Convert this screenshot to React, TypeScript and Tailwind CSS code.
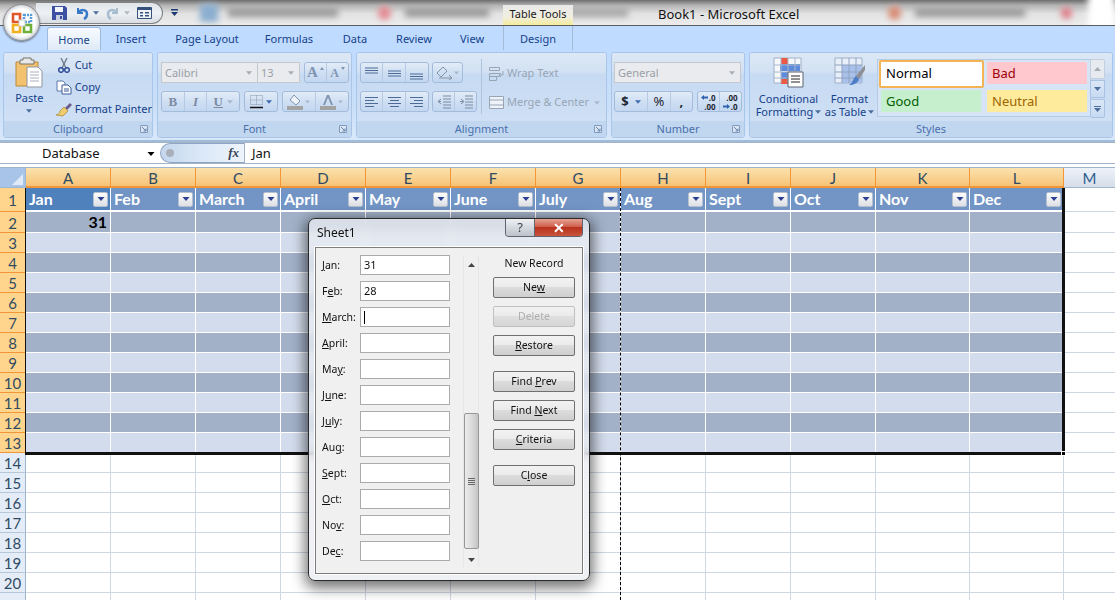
import type { ReactNode } from 'react';

const columns = ['A', 'B', 'C', 'D', 'E', 'F', 'G', 'H', 'I', 'J', 'K', 'L'];
const months = ['Jan', 'Feb', 'March', 'April', 'May', 'June', 'July', 'Aug', 'Sept', 'Oct', 'Nov', 'Dec'];
const rows = Array.from({ length: 21 }, (_, i) => i + 1);

// mnemonic underline: [before, underlined, after]
const fields: [string, string, string, string][] = [
  ['', 'J', 'an:', '31'],
  ['F', 'e', 'b:', '28'],
  ['', 'M', 'arch:', ''],
  ['', 'A', 'pril:', ''],
  ['Ma', 'y', ':', ''],
  ['J', 'u', 'ne:', ''],
  ['J', 'u', 'ly:', ''],
  ['Au', 'g', ':', ''],
  ['', 'S', 'ept:', ''],
  ['', 'O', 'ct:', ''],
  ['No', 'v', ':', ''],
  ['De', 'c', ':', ''],
];

function Caret({ className = 'fill-[#15428b]', w = 7 }: { className?: string; w?: number }) {
  return (
    <svg width={w} height={4} viewBox="0 0 7 4" className={className}>
      <path d="M0 0h7L3.5 4z" />
    </svg>
  );
}

function Launcher() {
  return (
    <svg width="9" height="9" viewBox="0 0 9 9" className="absolute right-[3px] top-[4px]">
      <path d="M.5.5h7v7h-7z" fill="#dbe6f4" stroke="#7f9cc0" />
      <path d="M2 2l4 4M6 3.5V6H3.5" fill="none" stroke="#6583a8" />
    </svg>
  );
}

function Group({ label, width, children }: { label: string; width: string; children: ReactNode }) {
  return (
    <div className={`${width} flex h-[86px] flex-col overflow-hidden rounded-[3px] border border-[#a9c6e8]`}>
      <div className="flex-1 bg-[linear-gradient(#dde8f5,#d2e1f3_28%,#c6daf2_32%,#cfe0f5)]">{children}</div>
      <div className="relative h-[16px] bg-[#c1d7f0] text-center text-[11px] leading-[15px] text-[#4a71ad]">
        {label}
        {label !== 'Styles' && <Launcher />}
      </div>
    </div>
  );
}

function BtnGroup({ children, className = '' }: { children: ReactNode; className?: string }) {
  return (
    <div className={`flex h-[21px] items-center divide-x divide-[#b5c9e2] rounded-[3px] border border-[#a3bcdc] bg-[linear-gradient(#e3ecf7,#cfdff3_50%,#c3d7f0)] ${className}`}>
      {children}
    </div>
  );
}

function Cell({ w, children }: { w: string; children: ReactNode }) {
  return <div className={`${w} flex h-full items-center justify-center gap-[2px]`}>{children}</div>;
}

function Lines({ kind }: { kind: 'top' | 'mid' | 'bot' | 'left' | 'center' | 'right' }) {
  const color = '#4d6b96';
  if (kind === 'top' || kind === 'mid' || kind === 'bot') {
    const y = kind === 'top' ? 3 : kind === 'mid' ? 6 : 9;
    return (
      <svg width="15" height="16" viewBox="0 0 15 16" stroke={color}>
        {[0, 2.5, 5].map((d) => (
          <path key={d} d={`M1 ${y + d}h13`} />
        ))}
      </svg>
    );
  }
  const d =
    kind === 'left'
      ? ['M1 3.5h13', 'M1 6.5h9', 'M1 9.5h13', 'M1 12.5h9']
      : kind === 'center'
        ? ['M1 3.5h13', 'M3 6.5h9', 'M1 9.5h13', 'M3 12.5h9']
        : ['M1 3.5h13', 'M5 6.5h9', 'M1 9.5h13', 'M5 12.5h9'];
  return (
    <svg width="15" height="16" viewBox="0 0 15 16" stroke={color}>
      {d.map((p) => (
        <path key={p} d={p} />
      ))}
    </svg>
  );
}

function Arrow({ flip = false }: { flip?: boolean }) {
  return (
    <svg width="7" height="5" viewBox="0 0 7 5" fill="#2e62b0" className={flip ? 'rotate-180' : ''}>
      <path d="M0 2.500L3 0v1.500h4v2H3V5z" />
    </svg>
  );
}

function TitleBar() {
  return (
    <div className="relative h-[26px] overflow-hidden border-b border-[#5c5c5c] bg-[linear-gradient(#6e6e6e,#b5b5b5_22%,#e2e2e2_55%,#ececec)]">
      {/* blurred aero glass showing the windows behind */}
      <div className="absolute inset-0 flex items-center pl-[200px] blur-[3px]">
        <div className="h-[18px] w-[20px] bg-[#8aaed0]" />
        <div className="ml-[10px] h-[9px] w-[120px] bg-[#9a9a9a]" />
        <div className="ml-[40px] h-[14px] w-[14px] rounded-full bg-[#e58a92]" />
        <div className="ml-[14px] h-[9px] w-[92px] bg-[#989898]" />
        <div className="ml-[76px] h-[9px] w-[70px] bg-[#a8a8a8]" />
        <div className="ml-[260px] h-[14px] w-[14px] rounded-full bg-[#d98a72]" />
        <div className="ml-[14px] h-[9px] w-[120px] bg-[#9a9a9a]" />
        <div className="ml-[36px] h-[12px] w-[12px] rounded-full bg-[#df7d88]" />
        <div className="ml-[16px] h-[80px] w-[30px] bg-white" />
      </div>
      <div className="relative flex h-full items-start">
        <div className="ml-[36px] mt-[2px] flex h-[22px] w-[127px] items-center rounded-r-[11px] border border-l-0 border-[#7f8285] bg-[linear-gradient(#dfe3e8,#eef1f4_50%,#dadde2)] pl-[16px]">
          <svg width="15" height="14" viewBox="0 0 15 14">
            <path d="M0 0h13l2 2v12H0z" fill="#3b4fa3" />
            <path d="M3 1h8v5H3z" fill="#f2f5fb" />
            <path d="M4 9h7v5H4z" fill="#c8d0e0" />
            <path d="M8 10h2v3H8z" fill="#3b4fa3" />
          </svg>
          <svg width="14" height="13" viewBox="0 0 14 13" fill="none" className="ml-[8px]">
            <path d="M3 1v5h5" stroke="#3a79c8" strokeWidth="2" />
            <path d="M3 6c3-4 9-4 9 1 0 2-1 4-3 5" stroke="#3a79c8" strokeWidth="2.5" />
          </svg>
          <Caret className="ml-[4px] fill-[#4c6f9e]" w={6} />
          <svg width="14" height="13" viewBox="0 0 14 13" fill="none" className="ml-[7px]">
            <path d="M11 1v5H6" stroke="#a9bdd0" strokeWidth="2" />
            <path d="M11 6C8 2 2 2 2 7c0 2 1 4 3 5" stroke="#a9bdd0" strokeWidth="2.5" />
          </svg>
          <Caret className="ml-[4px] fill-[#b3b9c1]" w={6} />
          <svg width="15" height="12" viewBox="0 0 15 12" className="ml-[7px]">
            <path d="M.5.5h14v11H.5z" fill="#eef2f6" stroke="#33517c" />
            <path d="M1 1h13v2H1z" fill="#33517c" />
            <path d="M3 5h3v1.5H3zM8 5h4v1.5H8zM3 8h3v1.5H3zM8 8h4v1.5H8z" fill="#33517c" />
          </svg>
        </div>
        <svg width="7" height="8" viewBox="0 0 7 8" className="ml-[8px] mt-[9px] fill-[#1d3b72]">
          <path d="M0 0h7v1.500H0zM0 3h7L3.500 7z" />
        </svg>
        <div className="ml-[325px] mt-[5px] flex h-[20px] w-[70px] items-center justify-center bg-[linear-gradient(#e9e9e9,#f1efe0_60%,#f4eb9a)] pb-[2px] text-[11px] text-[#1a1a1a]">
          Table Tools
        </div>
        <div className="ml-[85px] mt-[4px] text-[13px] leading-[20px] text-[#111]">Book1 - Microsoft Excel</div>
      </div>
    </div>
  );
}

function Tabs() {
  const tabs: [string, string][] = [
    ['Insert', 'w-[60px]'],
    ['Page Layout', 'w-[92px]'],
    ['Formulas', 'w-[72px]'],
    ['Data', 'w-[60px]'],
    ['Review', 'w-[58px]'],
    ['View', 'w-[58px]'],
  ];
  return (
    <div className="flex h-[24px] items-end bg-[#bfdbff] pl-[47px] text-[11px] text-[#15428b]">
      <div className="flex h-[23px] w-[54px] items-center justify-center rounded-t-[3px] border border-b-0 border-[#9dbbe0] bg-[linear-gradient(#f7fbff,#dfeaf8)] pt-[2px]">
        Home
      </div>
      {tabs.map(([t, w]) => (
        <div key={t} className={`${w} flex h-[24px] items-center justify-center pt-[2px]`}>
          {t}
        </div>
      ))}
      <div className="ml-[2px] flex h-[24px] w-[70px] items-center justify-center border-x border-[#a3bbd6] pt-[2px]">Design</div>
    </div>
  );
}

function ClipboardGroup() {
  return (
    <Group label="Clipboard" width="w-[150px]">
      <div className="flex h-full pl-[6px] pt-[4px] text-[11px] text-[#15428b]">
        <div className="flex w-[40px] flex-col items-center">
          <svg width="28" height="31" viewBox="0 0 28 31">
            <path d="M1 5h22v24H1z" fill="#f3c26f" stroke="#b98a3e" />
            <path d="M8 1h8v2h3v4H5V3h3z" fill="#e8e8e8" stroke="#77726a" />
            <path d="M12 10h11l4 4v16H12z" fill="#fff" stroke="#8f97a3" />
            <path d="M15 15h9M15 18h9M15 21h9M15 24h9" stroke="#a9b1bd" />
          </svg>
          <div className="mt-[3px] leading-[14px]">Paste</div>
          <Caret className="mt-[4px] fill-[#4c6f9e]" w={6} />
        </div>
        <div className="ml-[7px] flex flex-col gap-[8px] pt-[1px]">
          {[
            ['Cut', 'cut'],
            ['Copy', 'copy'],
            ['Format Painter', 'paint'],
          ].map(([t, k]) => (
            <div key={t} className="flex h-[14px] items-center gap-[3px] whitespace-nowrap leading-[14px]">
              <svg width="16" height="15" viewBox="0 0 16 15" fill="none">
                {k === 'cut' && (
                  <>
                    <path d="M5 0l5 10M11 0L6 10" stroke="#6a7686" strokeWidth="1.300" />
                    <circle cx="5" cy="12" r="2.300" stroke="#2d4f9a" strokeWidth="1.500" />
                    <circle cx="11" cy="12" r="2.300" stroke="#2d4f9a" strokeWidth="1.500" />
                  </>
                )}
                {k === 'copy' && (
                  <>
                    <path d="M1 1h6l2 2v8H1z" fill="#fff" stroke="#5a78a8" />
                    <path d="M6 5h6l3 3v6H6z" fill="#fff" stroke="#3a5d9a" />
                    <path d="M8 9h5M8 11h5" stroke="#3a5d9a" />
                  </>
                )}
                {k === 'paint' && (
                  <>
                    <path d="M9 6l5-5 2 2-5 5z" fill="#6a5a8c" />
                    <path d="M8 5l4 4-5 5-7-1c3-1 4-2 4-4z" fill="#f0cd6c" stroke="#a88534" strokeWidth=".7" />
                  </>
                )}
              </svg>
              <span>{t}</span>
            </div>
          ))}
        </div>
      </div>
    </Group>
  );
}

function FontGroup() {
  return (
    <Group label="Font" width="w-[195px]">
      <div className="flex h-full flex-col gap-[8px] pl-[3px] pt-[9px] text-[11px]">
        <div className="flex">
          <div className="flex h-[21px] w-[97px] items-center justify-between border border-[#c5c9ce] bg-[#e9ebee] px-[3px] pr-[5px] pt-px text-[#9a9fa6]">
            Calibri
            <Caret className="fill-[#a6acb4]" w={6} />
          </div>
          <div className="flex h-[21px] w-[42px] items-center justify-between border border-l-0 border-[#c5c9ce] bg-[#e9ebee] pl-[3px] pr-[5px] pt-px text-[#9a9fa6]">
            13
            <Caret className="fill-[#a6acb4]" w={6} />
          </div>
          <BtnGroup className="ml-[4px] w-[45px]">
            <Cell w="w-[23px]">
              <span className="font-['Liberation_Serif',serif] text-[15px] font-bold text-[#7f95b2]">A</span>
              <span className="mb-[9px] border-x-[2px] border-b-[3px] border-x-transparent border-b-[#7f95b2]" />
            </Cell>
            <Cell w="w-[22px]">
              <span className="font-['Liberation_Serif',serif] text-[12px] font-bold text-[#7f95b2]">A</span>
              <span className="mb-[9px] border-x-[2px] border-t-[3px] border-x-transparent border-t-[#7f95b2]" />
            </Cell>
          </BtnGroup>
        </div>
        <div className="flex gap-[4px]">
          <BtnGroup className="w-[79px] font-['Liberation_Serif',serif] text-[13px] text-[#7c8ca3]">
            <Cell w="w-[23px]"><b>B</b></Cell>
            <Cell w="w-[23px]"><i><b>I</b></i></Cell>
            <Cell w="w-[32px]">
              <u><b>U</b></u>
              <Caret className="ml-[2px] fill-[#a9b8cc]" w={6} />
            </Cell>
          </BtnGroup>
          <BtnGroup className="w-[34px]">
            <div className="flex h-full w-full items-center justify-center gap-[3px]">
              <svg width="13" height="14" viewBox="0 0 13 14" fill="none">
                <path d="M.5.5h12v9H.5zM6.500.5v9M.5 5h12" stroke="#8a96a6" strokeDasharray="1 1" />
                <path d="M0 12.500h13" stroke="#111" strokeWidth="1.500" />
              </svg>
              <Caret className="fill-[#3f6bb0]" w={6} />
            </div>
          </BtnGroup>
          <BtnGroup className="w-[67px]">
            <Cell w="w-[33px]">
              <svg width="16" height="16" viewBox="0 0 16 16">
                <path d="M7 1l6 6-4 4-6-5z" fill="#eef3fa" stroke="#8294ad" />
                <path d="M0 12h16v4H0z" fill="#a3a3a3" />
              </svg>
              <Caret className="fill-[#a9b8cc]" w={5} />
            </Cell>
            <Cell w="w-[33px]">
              <svg width="16" height="16" viewBox="0 0 16 16">
                <path d="M3 11L7 1h2l4 10h-2L8 3.500 5 11z" fill="#7f95b2" />
                <path d="M0 12h16v4H0z" fill="#a3a3a3" />
              </svg>
              <Caret className="fill-[#a9b8cc]" w={5} />
            </Cell>
          </BtnGroup>
        </div>
      </div>
    </Group>
  );
}

function AlignmentGroup() {
  return (
    <Group label="Alignment" width="w-[251px]">
      <div className="flex h-full pl-[3px] pt-[9px] text-[11px] text-[#98a5b5]">
        <div className="flex flex-col gap-[8px]">
          <div className="flex gap-[3px]">
            <BtnGroup className="w-[69px]">
              <Cell w="w-[23px]"><Lines kind="top" /></Cell>
              <Cell w="w-[23px]"><Lines kind="mid" /></Cell>
              <Cell w="w-[23px]"><Lines kind="bot" /></Cell>
            </BtnGroup>
            <BtnGroup className="w-[31px]">
              <div className="flex h-full w-full items-center justify-center gap-[1px]">
                <svg width="17" height="15" viewBox="0 0 17 15" fill="none" stroke="#8593a6">
                  <path d="M1 8l6-6 4 4-6 6zM3 13h13M13 10l3 3-3 2" />
                </svg>
                <Caret className="fill-[#a9b8cc]" w={5} />
              </div>
            </BtnGroup>
          </div>
          <div className="flex gap-[3px]">
            <BtnGroup className="w-[69px]">
              <Cell w="w-[23px]"><Lines kind="left" /></Cell>
              <Cell w="w-[23px]"><Lines kind="center" /></Cell>
              <Cell w="w-[23px]"><Lines kind="right" /></Cell>
            </BtnGroup>
            <BtnGroup className="w-[45px]">
              {['M5 7.500l-3 0M5 5L2 7.500 5 10', 'M2 7.500h3M3 5l3 2.500L3 10'].map((d) => (
                <Cell key={d} w="w-[22px]">
                  <svg width="15" height="15" viewBox="0 0 15 15" fill="none" stroke="#7b8ca4">
                    <path d={d} />
                    <path d="M7 2h8M7 5h8M7 8h8M7 11h8M7 14h8" />
                  </svg>
                </Cell>
              ))}
            </BtnGroup>
          </div>
        </div>
        <div className="ml-[4px] mt-[-3px] h-[55px] w-px bg-[#aec4de]" />
        <div className="ml-[7px] flex flex-col gap-[12px] pt-[3px]">
          <div className="flex h-[17px] items-center gap-[3px]">
            <svg width="15" height="15" viewBox="0 0 15 15" fill="none" stroke="#98a5b5">
              <path d="M.5 1.500h10v3H.5zM.5 7.500h10v3H.5zM.5 10.500h7v4H.5zM14 5v4h-4M12 7l-2 2 2 2" />
            </svg>
            Wrap Text
          </div>
          <div className="flex h-[17px] items-center gap-[3px]">
            <svg width="15" height="13" viewBox="0 0 15 13" fill="#eef3fa" stroke="#98a5b5">
              <path d="M.5.500h14v12H.5zM.5 4h14M.5 9h14" />
            </svg>
            Merge &amp; Center
            <Caret className="ml-[2px] fill-[#a9b8cc]" w={6} />
          </div>
        </div>
      </div>
    </Group>
  );
}

function NumberGroup() {
  return (
    <Group label="Number" width="w-[134px]">
      <div className="flex h-full flex-col gap-[8px] pl-[2px] pt-[9px] text-[11px]">
        <div className="flex h-[21px] w-[127px] items-center justify-between border border-[#c5c9ce] bg-[#e9ebee] pl-[3px] pr-[5px] pt-px text-[#9a9fa6]">
          General
          <Caret className="fill-[#a6acb4]" w={6} />
        </div>
        <div className="flex gap-[4px]">
          <BtnGroup className="w-[79px] text-[13px] font-bold text-[#1f2733]">
            <Cell w="w-[34px]">
              $ <Caret className="ml-[4px] fill-[#3f6bb0]" w={6} />
            </Cell>
            <Cell w="w-[23px]"><span className="font-normal">%</span></Cell>
            <Cell w="w-[22px]">,</Cell>
          </BtnGroup>
          <BtnGroup className="w-[45px] text-[8px] font-bold leading-[9px] text-[#1f2733]">
            <Cell w="w-[22px]">
              <div className="flex flex-col items-end">
                <span className="flex items-center gap-px"><Arrow />.0</span>
                <span>.00</span>
              </div>
            </Cell>
            <Cell w="w-[22px]">
              <div className="flex flex-col items-end">
                <span>.00</span>
                <span className="flex items-center gap-px"><Arrow flip />.0</span>
              </div>
            </Cell>
          </BtnGroup>
        </div>
      </div>
    </Group>
  );
}

function StyleTile({ className, children }: { className: string; children: ReactNode }) {
  return <div className={`flex items-center pl-[5px] text-[13px] ${className}`}>{children}</div>;
}

function StylesGroup() {
  return (
    <Group label="Styles" width="w-[364px]">
      <div className="flex h-full text-[11px] leading-[13px] text-[#15428b]">
        <div className="flex w-[67px] flex-col items-center pl-[10px] pt-[4px]">
          <svg width="31" height="31" viewBox="0 0 31 31">
            <path d="M1 1h27v25H1z" fill="#f6f8fb" stroke="#9fb0c8" />
            <path d="M8 1h7v8H8zM8 15h7v12H8z" fill="#ea5a44" />
            <path d="M7 7h20v7H7z M8 15h7v7H8z" fill="#5f8bdc" />
            <path d="M1 8h27M1 15h27M1 21h27M8 1v25M15 1v25M22 1v25" stroke="#a9b8cc" fill="none" />
            <path d="M15 15h15v15H15z" fill="#fff" stroke="#5c6470" />
            <path d="M18 19h9M18 22h9M18 25h9" stroke="#222" />
          </svg>
          <div className="mt-[4px] whitespace-nowrap text-center">
            Conditional
            <br />
            <span className="inline-flex items-center gap-[2px]">
              Formatting <Caret className="fill-[#4c6f9e]" w={6} />
            </span>
          </div>
        </div>
        <div className="flex w-[59px] flex-col items-center pl-[6px] pt-[4px]">
          <svg width="31" height="31" viewBox="0 0 31 31">
            <path d="M1 1h27v25H1z" fill="#e9eff8" stroke="#9fb0c8" />
            <path d="M8 8h20v18H8z" fill="#a9c1ea" />
            <path d="M1 8h27M1 15h27M1 21h27M8 1v25M15 1v25M22 1v25" stroke="#8fa3c0" fill="none" />
            <path d="M31 8l-9 11 3 3 6-9z" fill="#8d8f92" />
            <path d="M22 19l3 3c-1 4-5 6-10 6 4-2 4-7 7-9z" fill="#4f7ec9" />
          </svg>
          <div className="mt-[4px] whitespace-nowrap text-center">
            Format
            <br />
            <span className="inline-flex items-center gap-[2px]">
              as Table <Caret className="fill-[#4c6f9e]" w={6} />
            </span>
          </div>
        </div>
        <div className="ml-[1px] mt-[6px] grid h-[58px] w-[214px] grid-cols-[105px_100px] content-start gap-x-[3px] border border-[#b4cbe6] bg-[#d6e4f6] pl-px">
          <StyleTile className="h-[28px] rounded-[2px] border-2 border-[#f2b455] bg-white pb-[2px] text-black">Normal</StyleTile>
          <StyleTile className="mt-[2px] h-[22px] bg-[#ffc7ce] text-[#9c0006]">Bad</StyleTile>
          <StyleTile className="ml-[2px] mt-[2px] h-[22px] w-[100px] bg-[#c6efce] text-[#006100]">Good</StyleTile>
          <StyleTile className="mt-[2px] h-[22px] bg-[#ffeb9c] text-[#9c6500]">Neutral</StyleTile>
        </div>
        <div className="ml-[-1px] mt-[6px] flex w-[15px] flex-col gap-[1px]">
          <div className="flex h-[20px] items-center justify-center rounded-t-[2px] border border-[#c3cfde] bg-[#e7ebf0]">
            <Caret className="rotate-180 fill-[#a7adb5]" w={7} />
          </div>
          <div className="flex h-[18px] items-center justify-center border border-[#a9c2e2] bg-[linear-gradient(#dbe7f6,#c7daf2)]">
            <Caret className="fill-[#4f6f9e]" w={7} />
          </div>
          <div className="flex h-[19px] flex-col items-center justify-center gap-[1px] rounded-b-[2px] border border-[#a9c2e2] bg-[linear-gradient(#dbe7f6,#c7daf2)]">
            <div className="h-px w-[7px] bg-[#4f6f9e]" />
            <Caret className="fill-[#4f6f9e]" w={7} />
          </div>
        </div>
      </div>
    </Group>
  );
}

function FormulaBar() {
  return (
    <div className="flex h-[22px] items-center border-y border-[#a3b4c8] bg-white text-[13px] text-[#111]">
      <div className="flex w-[160px] items-center justify-between pl-[42px] pr-[5px] pt-[2px]">
        Database
        <Caret className="fill-black" w={8} />
      </div>
      <div className="flex h-[20px] w-[84px] items-center justify-between rounded-l-[10px] border-y border-l border-[#8ea6c2] bg-[linear-gradient(90deg,#c5d7ee,#dbe8f8_50%,#eef4fb)] pl-[5px] pr-[5px]">
        <span className="h-[8px] w-[8px] rounded-full bg-[#a9b0ba]" />
        <span className="font-['Liberation_Serif',serif] text-[13px] font-bold italic text-[#3a4352]">fx</span>
      </div>
      <div className="flex h-full flex-1 items-center border-l border-[#a3b4c8] pl-[7px] pt-[2px]">Jan</div>
    </div>
  );
}

function FilterButton() {
  return (
    <span className="flex h-[15px] w-[15px] items-center justify-center rounded-[2px] border border-[#b5bfcd] bg-[linear-gradient(#fdfdfd,#dcdfe4)]">
      <Caret className="fill-[#2a3f8f]" w={8} />
    </span>
  );
}

function Sheet() {
  const labelFont = "pt-[2px] font-['Lato',sans-serif] text-[15px] text-[#2f4a63]";
  return (
    <div className="grid grid-cols-[26px_85px_85px_85px_85px_85px_85px_85px_85px_85px_85px_94px_94px_51px] grid-rows-[20px_24px_21px_repeat(19,20px)] font-['Lato',sans-serif]">
      <div className="flex items-end justify-end border-r border-b border-[#9eb6ce] bg-[#a9c4e9] p-[2px]">
        <div className="border-b-[11px] border-l-[11px] border-b-[#dfe9f7] border-l-transparent" />
      </div>
      {columns.map((c) => (
        <div key={c} className={`flex items-center justify-center border-r border-b-2 border-r-[#f29536] border-b-[#f29536] bg-[linear-gradient(#fbe2ae,#f6c377)] ${labelFont}`}>
          {c}
        </div>
      ))}
      <div className="flex items-center justify-center border-b border-[#9eb6ce] bg-[linear-gradient(#eef3fa,#d5dde8)] pt-[2px] text-[15px] text-[#2f5c8f]">M</div>
      {rows.map((r) => (
        <div key={r} className="contents">
          <div className={`flex items-center justify-center border-r border-b ${r <= 13 ? 'border-r-[#f29536] border-b-[#f29536] bg-[#ffd58d]' : 'border-r-[#9eb6ce] border-b-[#b7c7da] bg-[#e4ecf7]'} ${labelFont}`}>
            {r <= 20 ? r : ''}
          </div>
          {columns.map((c, i) => {
            if (r === 1) {
              return (
                <div key={c} className={`flex items-center justify-between border-r border-b-2 border-r-white border-b-white pl-[3px] pr-[2px] text-[16px] font-bold text-white ${i === 0 ? 'bg-[#4f81bd]' : 'bg-[#7295c6]'}`}>
                  {months[i]}
                  <FilterButton />
                </div>
              );
            }
            if (r <= 13) {
              return (
                <div key={c} className={`flex items-center justify-end border-r border-b border-white pr-[3px] text-[16px] font-bold text-black ${r % 2 === 0 ? 'bg-[#a2b1c8]' : 'bg-[#d3dcec]'}`}>
                  {r === 2 && i === 0 ? '31' : ''}
                </div>
              );
            }
            return <div key={c} className="border-r border-b border-[#d0d7e5] bg-white" />;
          })}
          <div className="border-b border-[#d0d7e5] bg-white" />
        </div>
      ))}
    </div>
  );
}

function DialogButton({ before = '', mark, after = '', disabled = false, className = '' }: { before?: string; mark?: string; after?: string; disabled?: boolean; className?: string }) {
  return (
    <div className={`flex h-[21px] w-[82px] items-center justify-center rounded-[2px] border bg-[linear-gradient(#f2f2f2,#ebebeb_45%,#dcdcdc_50%,#cfcfcf)] pt-px ${disabled ? 'border-[#b5b5b5] text-[#a0a0a0] opacity-80' : 'border-[#707070] text-[#111]'} ${className}`}>
      <span>
        {before}
        {mark && <u>{mark}</u>}
        {after}
      </span>
    </div>
  );
}

function RecordDialog() {
  return (
    <div className="absolute left-[308px] top-[218px] flex h-[363px] w-[282px] flex-col rounded-[7px] border border-[#2a2a2a] bg-[#e9ecf1]/75 px-[6px] pb-[6px] text-[10.5px] text-[#111] shadow-[0_4px_14px_3px_rgba(0,0,0,0.55)] backdrop-blur-[4px]">
      <div className="flex h-[28px] items-start justify-between">
        <div className="pl-[2px] pt-[5px] text-[12px] leading-[18px]">Sheet1</div>
        <div className="flex h-[18px] overflow-hidden rounded-b-[4px] border border-t-0 border-[#5f6570]">
          <div className="flex w-[29px] items-center justify-center border-r border-[#5f6570] bg-[linear-gradient(#eef0f3,#bcc2cb)] text-[13px] text-[#3c434e]">?</div>
          <div className="flex w-[47px] items-center justify-center bg-[linear-gradient(#e5a193,#d0604c_45%,#b8321e_50%,#c9553c)] text-[14px] font-bold leading-none text-white">✕</div>
        </div>
      </div>
      <div className="flex flex-1 border border-[#7d7d7d] bg-[#f0f0f0] pl-[6px] pr-[7px] pt-[7px] shadow-[0_0_0_1px_#fff]">
        <div className="flex w-[128px] flex-col gap-[6px]">
          {fields.map(([b, m, a, v]) => (
            <div key={m + a} className="flex h-[20px] items-center">
              <div className="w-[38px] whitespace-nowrap pt-[2px]">
                {b}
                <u>{m}</u>
                {a}
              </div>
              <div className="flex h-[20px] w-[90px] items-center border border-[#ababab] bg-white pl-[3px] pt-px text-[11px]">
                {v}
                {m === 'M' && <span className="h-[13px] w-px bg-black" />}
              </div>
            </div>
          ))}
        </div>
        <div className="ml-[13px] mt-px flex h-[311px] w-[16px] flex-col items-center border-x border-[#e6e6e6]">
          <div className="flex h-[18px] items-center">
            <Caret className="rotate-180 fill-[#444]" w={7} />
          </div>
          <div className="flex-1" />
          <div className="flex h-[136px] w-[15px] items-center justify-center rounded-[2px] border border-[#979797] bg-[linear-gradient(90deg,#eaeaea,#dcdcdc_50%,#c4c4c4)]">
            <div className="flex flex-col gap-[1px]">
              <div className="h-px w-[7px] bg-[#666]" />
              <div className="h-px w-[7px] bg-[#666]" />
              <div className="h-px w-[7px] bg-[#666]" />
              <div className="h-px w-[7px] bg-[#666]" />
            </div>
          </div>
          <div className="flex h-[18px] items-center pt-[3px]">
            <Caret className="fill-[#444]" w={7} />
          </div>
        </div>
        <div className="ml-[14px] flex flex-col items-center">
          <div className="h-[22px] leading-[16px]">New Record</div>
          <DialogButton before="Ne" mark="w" />
          <DialogButton before="Delete" disabled className="mt-[8px]" />
          <DialogButton mark="R" after="estore" className="mt-[8px]" />
          <DialogButton before="Find " mark="P" after="rev" className="mt-[15px]" />
          <DialogButton before="Find " mark="N" after="ext" className="mt-[8px]" />
          <DialogButton mark="C" after="riteria" className="mt-[8px]" />
          <DialogButton before="C" mark="l" after="ose" className="mt-[15px]" />
        </div>
      </div>
    </div>
  );
}

export default function App() {
  return (
    <div className="relative h-[600px] w-[1115px] overflow-hidden bg-white font-['Noto_Sans',sans-serif]">
      <TitleBar />
      <Tabs />
      <div className="flex h-[92px] gap-[4px] border-b-[2px] border-[#a0bcd8] bg-[linear-gradient(#bfdbff,#c9dff8_60%,#d8e8fb)] pl-[3px] pt-[2px]">
        <ClipboardGroup />
        <FontGroup />
        <AlignmentGroup />
        <NumberGroup />
        <StylesGroup />
      </div>
      <FormulaBar />
      <div className="h-[4px] border-b border-[#9fb3ca] bg-white" />
      <Sheet />

      {/* selection frame round the table */}
      <div className="absolute left-[25px] top-[188px] h-[267px] w-[1040px] border-b-[3px] border-l border-r-[3px] border-[#111]">
        <div className="absolute -bottom-[4px] -right-[4px] h-[5px] w-[5px] border border-white bg-black" />
      </div>
      {/* page break */}
      <div className="absolute bottom-0 left-[620px] top-[188px] border-l border-dashed border-black" />

      {/* office button */}
      <div className="absolute left-[3px] top-[4px] flex h-[37px] w-[37px] items-center justify-center rounded-full border border-[#8d8f93] bg-[radial-gradient(circle,#ffffff_55%,#d5d8dc_70%,#f2f3f5)] shadow-[0_1px_2px_rgba(0,0,0,0.5)]">
        <svg width="24" height="24" viewBox="0 0 24 24" fill="none" strokeWidth="2.600">
          <path d="M10 3H3v8h7z" stroke="#e0562b" />
          <path d="M14 4h7v7h-7z" stroke="#5a9bd8" strokeDasharray="2 1" />
          <path d="M3 14h7v7H3z" stroke="#f2b01e" />
          <path d="M14 14h7v7h-7z" stroke="#6fb03a" />
          <path d="M9 9h6v6H9z" fill="#fff" stroke="#c9ccd1" strokeWidth="1" />
        </svg>
      </div>

      <RecordDialog />
    </div>
  );
}
